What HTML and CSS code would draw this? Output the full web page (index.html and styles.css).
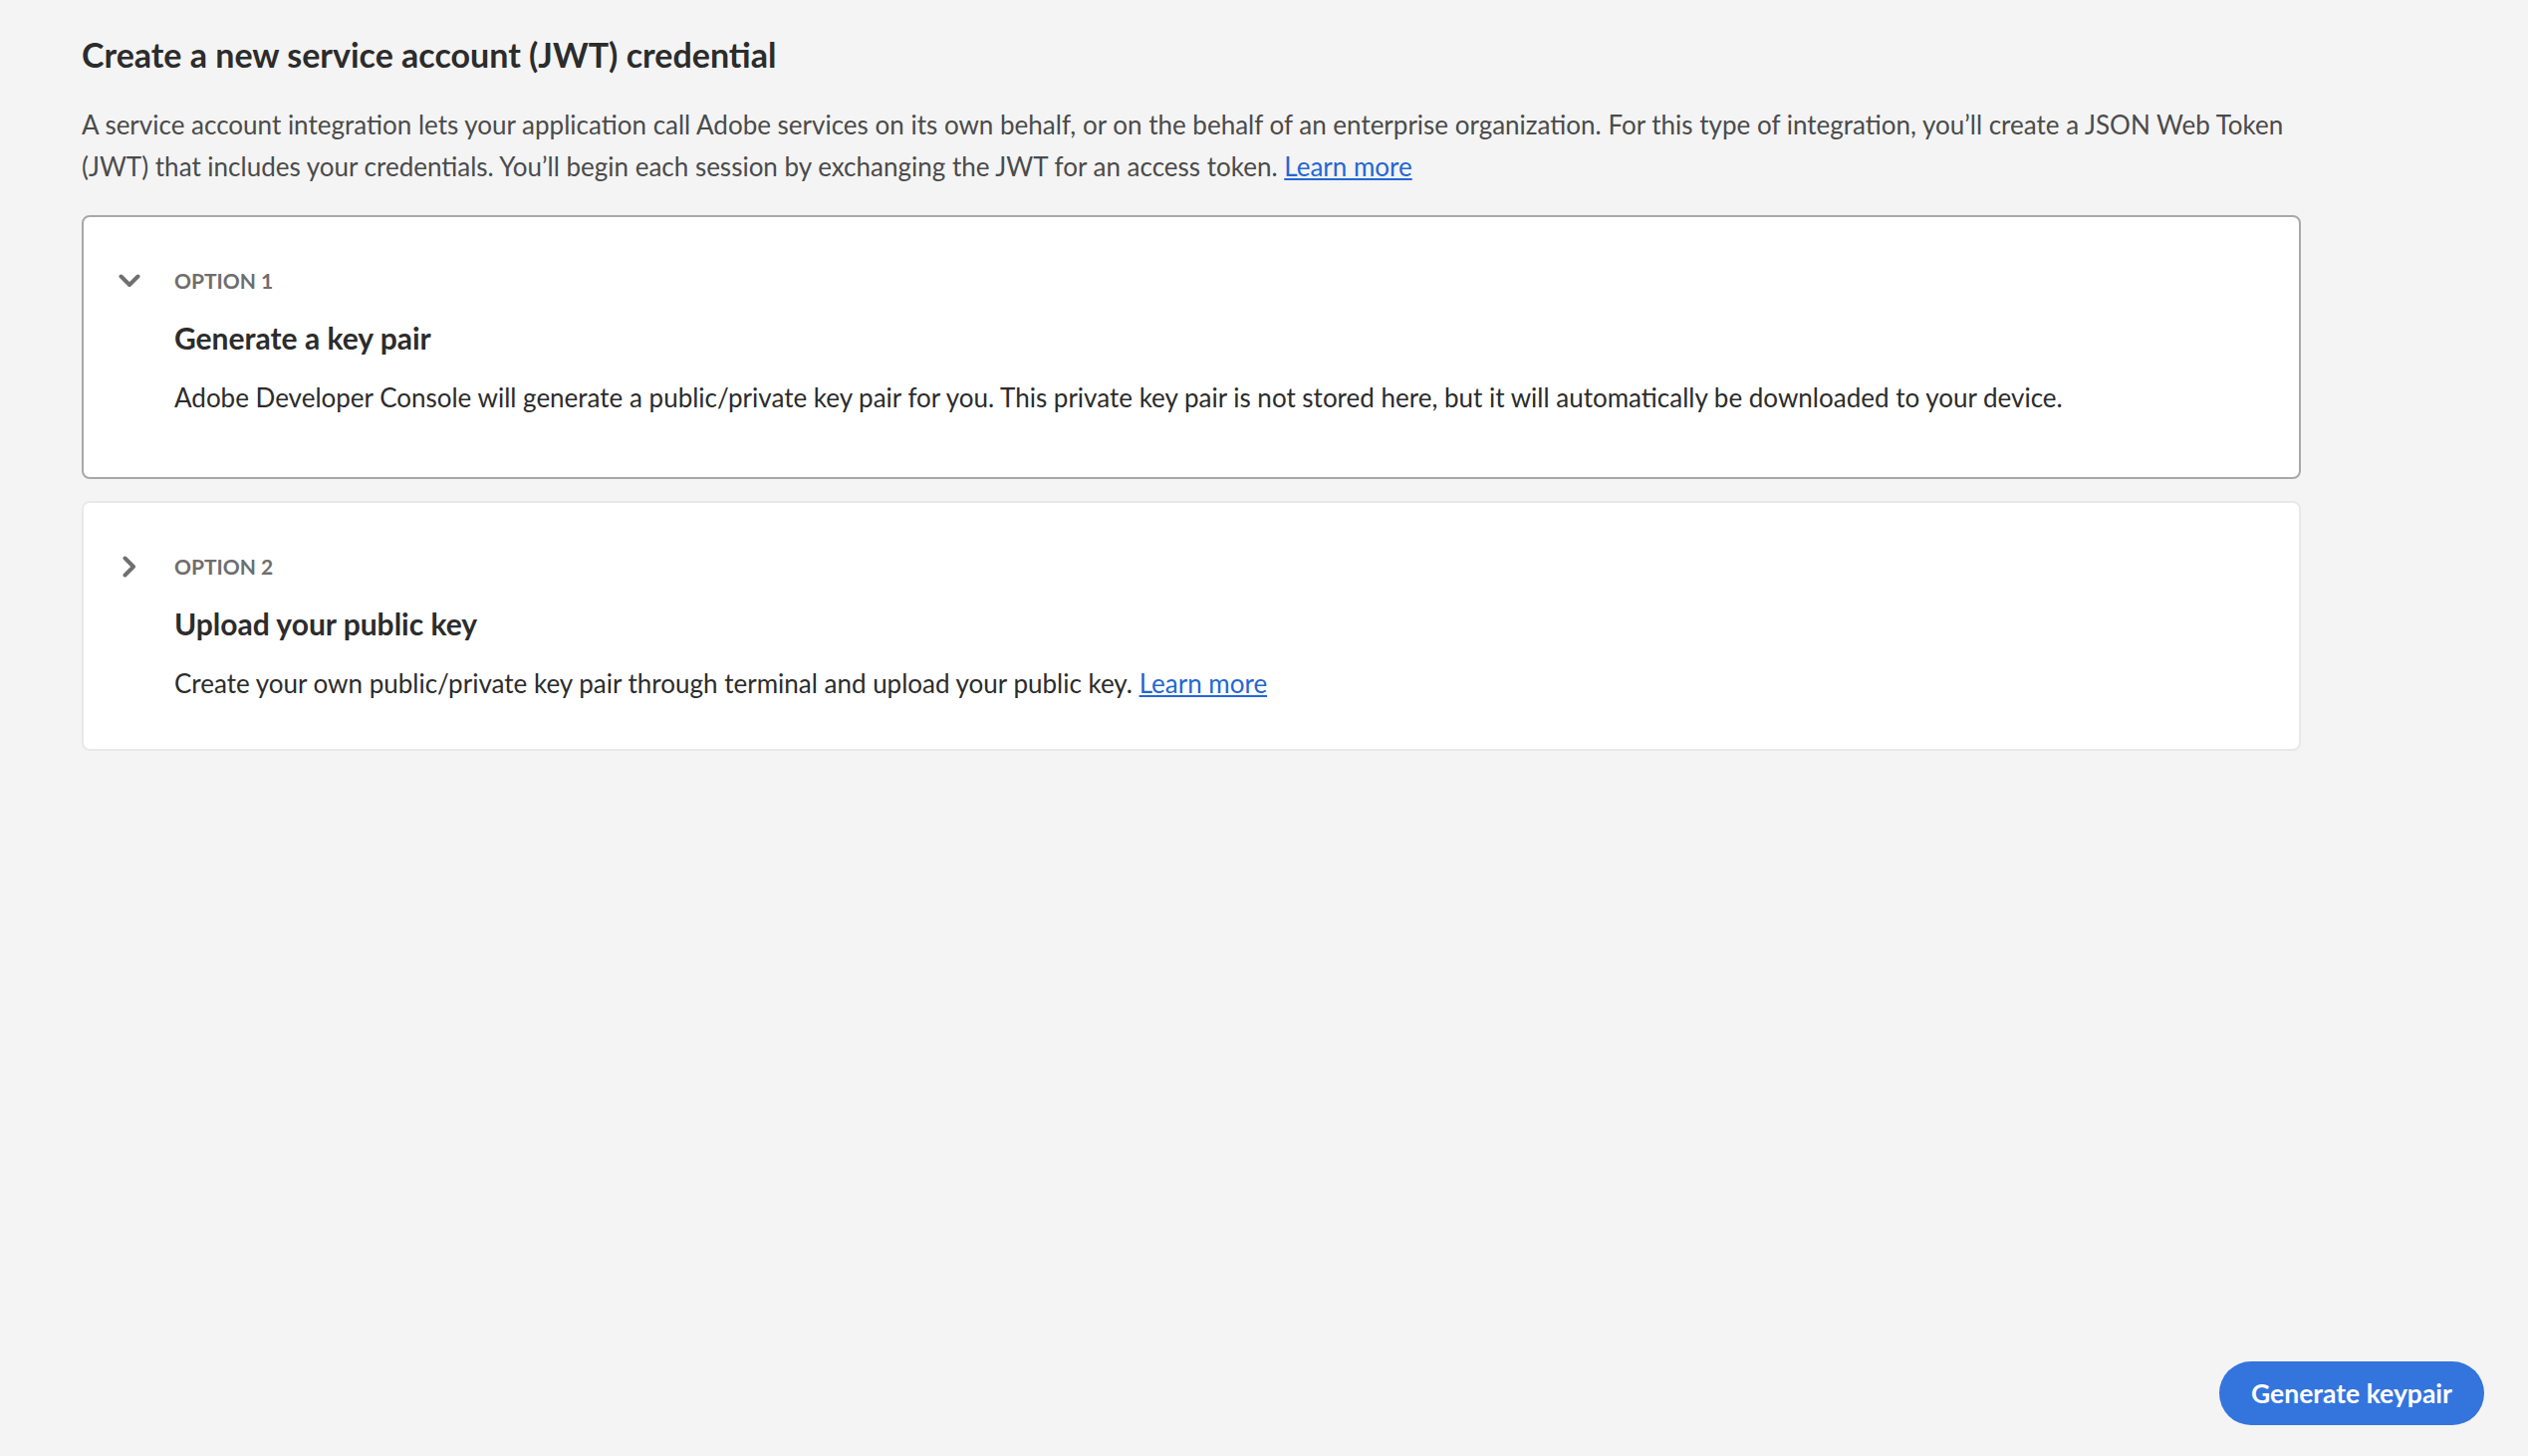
FILE: index.html
```html
<!DOCTYPE html>
<html lang="en">
<head>
    <meta charset="UTF-8">
    <meta name="viewport" content="width=device-width, initial-scale=1.0">
    <title>Create a new service account (JWT) credential</title>
    <link rel="stylesheet" href="styles.css">
</head>
<body>
    <div class="page">
        <main class="content">
            <h1 class="page-title">Create a new service account (JWT) credential</h1>
            <p class="page-intro">A service account integration lets your application call Adobe services on its own behalf, or on the behalf of an enterprise organization. For this type of integration, you’ll create a JSON Web Token (JWT) that includes your credentials. You’ll begin each session by exchanging the JWT for an access token. <a href="#">Learn more</a></p>

            <div class="option-card is-open">
                <div class="option-toggle">
                    <svg width="22" height="14" viewBox="0 0 22 14">
                        <path d="M2.5 2.5 L11 11 L19.5 2.5" fill="none" stroke="#707070" stroke-width="4" stroke-linecap="round" stroke-linejoin="round"/>
                    </svg>
                </div>
                <div class="option-body">
                    <div class="option-label">Option 1</div>
                    <h2 class="option-title">Generate a key pair</h2>
                    <p class="option-text">Adobe Developer Console will generate a public/private key pair for you. This private key pair is not stored here, but it will automatically be downloaded to your device.</p>
                </div>
            </div>

            <div class="option-card">
                <div class="option-toggle">
                    <svg width="14" height="22" viewBox="0 0 14 22">
                        <path d="M2.5 2.5 L11 11 L2.5 19.5" fill="none" stroke="#707070" stroke-width="4" stroke-linecap="round" stroke-linejoin="round"/>
                    </svg>
                </div>
                <div class="option-body">
                    <div class="option-label">Option 2</div>
                    <h2 class="option-title">Upload your public key</h2>
                    <p class="option-text">Create your own public/private key pair through terminal and upload your public key. <a href="#">Learn more</a></p>
                </div>
            </div>
        </main>

        <footer class="actions">
            <button class="btn-cta">Generate keypair</button>
        </footer>
    </div>
</body>
</html>
```

FILE: styles.css
```css
* {
    box-sizing: border-box;
    margin: 0;
    padding: 0;
}

body {
    background: #f4f4f4;
    color: #2c2c2c;
    font-family: Lato, "Liberation Sans", sans-serif;
}

a {
    color: #2467d3;
    text-decoration: underline;
}

.page {
    min-height: 100vh;
    display: flex;
    flex-direction: column;
    padding: 32px 0 31px 82px;
}

.content {
    flex: 1;
    width: 2228px;
}

.page-title {
    font-size: 34px;
    line-height: 46px;
    font-weight: bold;
    color: #2c2c2c;
}

.page-intro {
    margin-top: 26px;
    font-size: 26px;
    line-height: 42px;
    color: #4b4b4b;
}

.option-card {
    display: flex;
    gap: 33px;
    margin-top: 28px;
    padding: 49px 40px 45px 34px;
    background: #fff;
    border: 2px solid #e8e8e8;
    border-radius: 8px;
}

.option-card + .option-card {
    margin-top: 22px;
}

.option-card.is-open {
    border-color: #a8a8a8;
    padding-bottom: 59px;
}

.option-toggle {
    width: 24px;
    height: 30px;
    display: flex;
    align-items: center;
    justify-content: center;
}

.option-label {
    font-size: 21px;
    line-height: 30px;
    font-weight: bold;
    text-transform: uppercase;
    color: #6e6e6e;
}

.option-title {
    margin-top: 22px;
    font-size: 30px;
    line-height: 40px;
    font-weight: bold;
    color: #2c2c2c;
}

.option-text {
    margin-top: 19px;
    font-size: 26px;
    line-height: 42px;
    color: #2c2c2c;
}

.actions {
    display: flex;
    justify-content: flex-end;
    padding-right: 44px;
}

.btn-cta {
    height: 64px;
    padding: 0 32px;
    border: none;
    border-radius: 32px;
    background: #3474dd;
    color: #fff;
    font-family: inherit;
    font-size: 26.5px;
    font-weight: bold;
    cursor: pointer;
}
```
